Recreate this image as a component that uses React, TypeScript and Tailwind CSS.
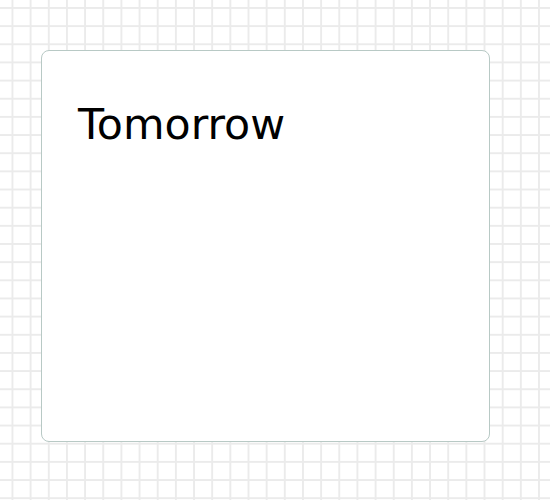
export default function App() {
  return (
    <div
      className="min-h-[500px] w-full bg-white pl-[41px] pt-[50px]"
      style={{
        backgroundImage:
          "linear-gradient(to right, #ebebeb 2px, transparent 2px), linear-gradient(to bottom, #ebebeb 2px, transparent 2px)",
        backgroundSize: "18.17px 18.17px",
        backgroundPosition: "11.5px 7px",
      }}
    >
      <div className="h-[392px] w-[449px] rounded-[8px] border border-[#b8c9c5] bg-white px-[36px] pt-[48px]">
        <h1 className="font-['DejaVu_Sans',Verdana,sans-serif] text-[42.7px] leading-[50px] text-black">
          Tomorrow
        </h1>
      </div>
    </div>
  );
}
